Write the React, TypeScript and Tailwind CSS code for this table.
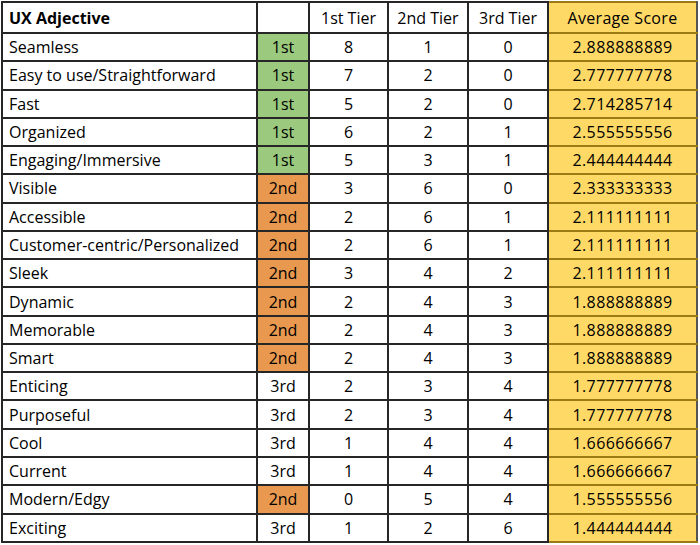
const rows: [string, string, number, number, number, string][] = [
  ["Seamless", "1st", 8, 1, 0, "2.888888889"],
  ["Easy to use/Straightforward", "1st", 7, 2, 0, "2.777777778"],
  ["Fast", "1st", 5, 2, 0, "2.714285714"],
  ["Organized", "1st", 6, 2, 1, "2.555555556"],
  ["Engaging/Immersive", "1st", 5, 3, 1, "2.444444444"],
  ["Visible", "2nd", 3, 6, 0, "2.333333333"],
  ["Accessible", "2nd", 2, 6, 1, "2.111111111"],
  ["Customer-centric/Personalized", "2nd", 2, 6, 1, "2.111111111"],
  ["Sleek", "2nd", 3, 4, 2, "2.111111111"],
  ["Dynamic", "2nd", 2, 4, 3, "1.888888889"],
  ["Memorable", "2nd", 2, 4, 3, "1.888888889"],
  ["Smart", "2nd", 2, 4, 3, "1.888888889"],
  ["Enticing", "3rd", 2, 3, 4, "1.777777778"],
  ["Purposeful", "3rd", 2, 3, 4, "1.777777778"],
  ["Cool", "3rd", 1, 4, 4, "1.666666667"],
  ["Current", "3rd", 1, 4, 4, "1.666666667"],
  ["Modern/Edgy", "2nd", 0, 5, 4, "1.555555556"],
  ["Exciting", "3rd", 1, 2, 6, "1.444444444"],
];

const tierBg: Record<string, string> = {
  "1st": "bg-[#9bc97e]",
  "2nd": "bg-[#e8994f]",
  "3rd": "bg-white",
};

export default function App() {
  return (
    <div className="min-h-screen bg-white pl-px pt-px font-['Open_Sans',sans-serif] text-[16px] text-black">
      <table className="table-fixed border-collapse border-2 border-[#3a3a3a]">
        <colgroup>
          <col className="w-[255px]" />
          <col className="w-[52px]" />
          <col className="w-[79px]" />
          <col className="w-[80px]" />
          <col className="w-[80px]" />
          <col className="w-[149px]" />
        </colgroup>
        <thead>
          <tr className="h-[31px]">
            <th className="border-2 border-[#262626] pl-[6px] text-left font-bold">UX Adjective</th>
            <th className="border-2 border-[#262626]"></th>
            <th className="border-2 border-[#262626] font-normal">1st Tier</th>
            <th className="border-2 border-[#262626] font-normal">2nd Tier</th>
            <th className="border-2 border-[#262626] font-normal">3rd Tier</th>
            <th className="border-2 border-y-[#9c7a14] border-l-[#262626] border-r-[#555] bg-[#ffd966] font-normal tracking-[0.3px]">
              Average Score
            </th>
          </tr>
        </thead>
        <tbody>
          {rows.map(([name, tier, a, b, c, avg]) => (
            <tr key={name} className="h-[28.28px]">
              <td className="border-2 border-[#262626] pl-[6px] leading-none">{name}</td>
              <td className={`border-2 border-[#262626] text-center leading-none ${tierBg[tier]}`}>{tier}</td>
              <td className="border-2 border-[#262626] text-center leading-none">{a}</td>
              <td className="border-2 border-[#262626] text-center leading-none">{b}</td>
              <td className="border-2 border-[#262626] text-center leading-none">{c}</td>
              <td className="border-2 border-y-[#9c7a14] border-l-[#262626] border-r-[#555] bg-[#ffd966] text-center leading-none tracking-[0.4px]">
                {avg}
              </td>
            </tr>
          ))}
        </tbody>
      </table>
    </div>
  );
}
